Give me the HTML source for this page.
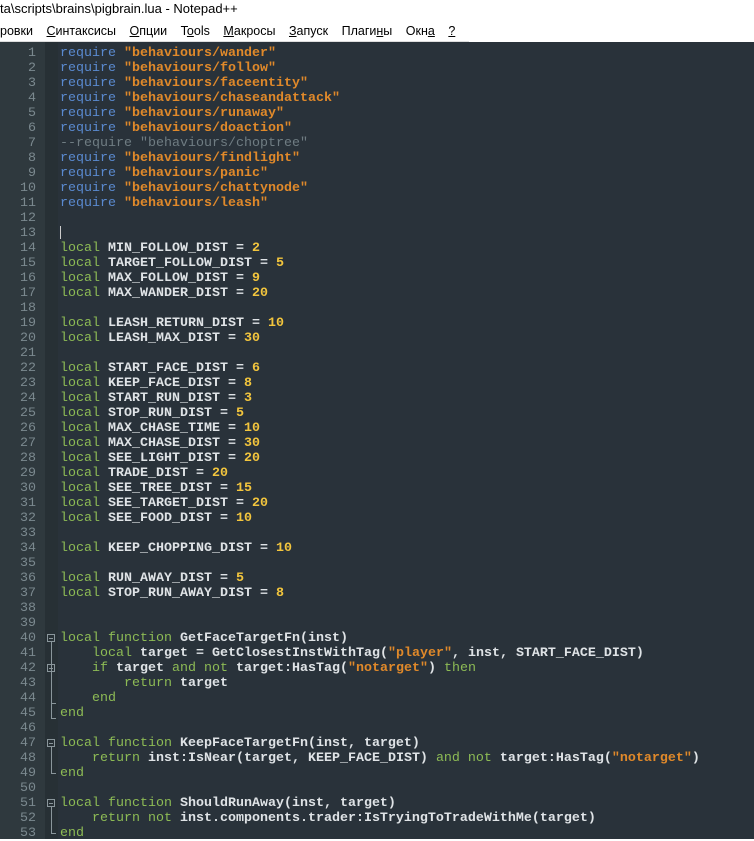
<!DOCTYPE html>
<html><head><meta charset="utf-8"><style>
body{margin:0;width:754px;height:839px;overflow:hidden;background:#fff;font-family:"Liberation Sans","DejaVu Sans",sans-serif;position:relative}
#title{position:absolute;left:0;top:0;height:20px;line-height:18px;font-size:13px;color:#000;white-space:nowrap}
#menu{position:absolute;left:0;top:20px;height:21px;line-height:23px;font-size:12.5px;color:#000;white-space:nowrap;border-bottom:1px solid #ddd}
#menu span{margin-right:13.5px}
#ed{position:absolute;left:0;top:42px;width:754px;height:797px;background:#29323a}
#gut{position:absolute;left:0;top:0;width:45px;height:797px;background:#2f393e}
#fold{position:absolute;left:45px;top:0;width:13px;height:797px;background:#273035}
.l{position:absolute;left:0;height:15px;line-height:15px;font-family:"Liberation Mono",monospace;font-size:13.33px;white-space:pre;font-weight:bold}
.n{width:36px;text-align:right;color:#7b898f;font-weight:normal}
.c{left:60px;color:#dfe3e6}
.k{color:#5a8ad0;font-weight:normal}
.s{color:#e0892a}
.g{color:#8dbb55;font-weight:normal}
.y{color:#f2c53d}
.m{color:#6f7c82;font-weight:normal}
.fb{position:absolute;left:47px;width:8px;height:8px;border:1px solid #8a969b;box-sizing:border-box}
.fb::after{content:"";position:absolute;left:1px;top:3px;width:4px;height:1px;background:#8a969b}
.vl{position:absolute;left:51px;width:1px;background:#8a969b}
.hl{position:absolute;left:51px;width:5px;height:1px;background:#8a969b}
</style></head><body>
<div id="title">ta\scripts\brains\pigbrain.lua - Notepad++</div>
<div id="menu"><span>ровки</span><span><u>С</u>интаксисы</span><span><u>О</u>пции</span><span>T<u>o</u>ols</span><span><u>М</u>акросы</span><span><u>З</u>апуск</span><span>Плаги<u>н</u>ы</span><span>Окн<u>а</u></span><span><u>?</u></span></div>
<div id="ed"><div id="gut"></div><div id="fold"></div>
<div style="position:absolute;left:60px;top:184px;width:1px;height:13px;background:#ccc"></div>
<div id="lines"></div>
<div class="fb" style="top:592px"></div><div class="vl" style="top:600px;height:76px"></div><div class="hl" style="top:676px"></div>
<div class="fb" style="top:622px"></div><div class="hl" style="top:661px"></div>
<div class="fb" style="top:697px"></div><div class="vl" style="top:705px;height:26px"></div><div class="hl" style="top:731px"></div>
<div class="fb" style="top:757px"></div><div class="vl" style="top:765px;height:26px"></div><div class="hl" style="top:791px"></div>
</div>
<script>
const K=s=>'<span class="k">'+s+'</span>',S=s=>'<span class="s">'+s+'</span>',G=s=>'<span class="g">'+s+'</span>',Y=s=>'<span class="y">'+s+'</span>';
const L=[];
["wander","follow","faceentity","chaseandattack","runaway","doaction"].forEach(x=>L.push(K('require')+' '+S('"behaviours/'+x+'"')));
L.push('<span class="m">--require "behaviours/choptree"</span>');
["findlight","panic","chattynode","leash"].forEach(x=>L.push(K('require')+' '+S('"behaviours/'+x+'"')));
L.push('','');
const V=(a,b)=>G('local')+' '+a+' = '+Y(b);
[["MIN_FOLLOW_DIST",2],["TARGET_FOLLOW_DIST",5],["MAX_FOLLOW_DIST",9],["MAX_WANDER_DIST",20],null,["LEASH_RETURN_DIST",10],["LEASH_MAX_DIST",30],null,["START_FACE_DIST",6],["KEEP_FACE_DIST",8],["START_RUN_DIST",3],["STOP_RUN_DIST",5],["MAX_CHASE_TIME",10],["MAX_CHASE_DIST",30],["SEE_LIGHT_DIST",20],["TRADE_DIST",20],["SEE_TREE_DIST",15],["SEE_TARGET_DIST",20],["SEE_FOOD_DIST",10],null,["KEEP_CHOPPING_DIST",10],null,["RUN_AWAY_DIST",5],["STOP_RUN_AWAY_DIST",8]].forEach(v=>L.push(v?V(v[0],v[1]):''));
L.push('','');
L.push(G('local function')+' GetFaceTargetFn(inst)');
L.push('    '+G('local')+' target = GetClosestInstWithTag('+S('"player"')+', inst, START_FACE_DIST)');
L.push('    '+G('if')+' target '+G('and not')+' target:HasTag('+S('"notarget"')+') '+G('then'));
L.push('        '+G('return')+' target');
L.push('    '+G('end'));
L.push(G('end'),'');
L.push(G('local function')+' KeepFaceTargetFn(inst, target)');
L.push('    '+G('return')+' inst:IsNear(target, KEEP_FACE_DIST) '+G('and not')+' target:HasTag('+S('"notarget"')+')');
L.push(G('end'),'');
L.push(G('local function')+' ShouldRunAway(inst, target)');
L.push('    '+G('return not')+' inst.components.trader:IsTryingToTradeWithMe(target)');
L.push(G('end'));
let h='';
L.forEach((t,i)=>{const top=4+i*15;h+='<div class="l n" style="top:'+top+'px">'+(i+1)+'</div><div class="l c" style="top:'+top+'px">'+t+'</div>';});
document.getElementById('lines').innerHTML=h;
</script>
</body></html>
